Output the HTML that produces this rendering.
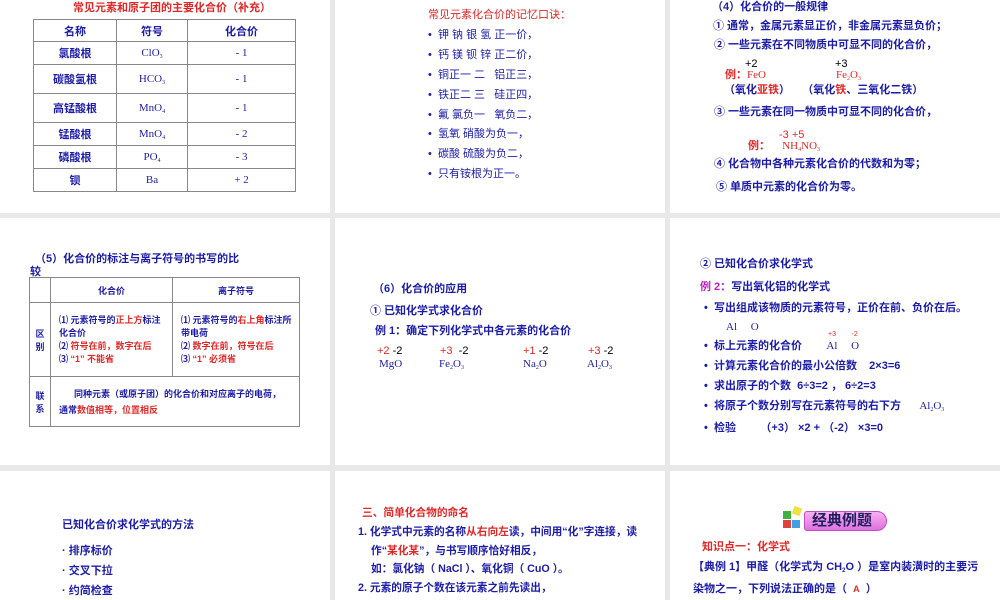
<!DOCTYPE html>
<html><head><meta charset="utf-8"><style>
*{margin:0;padding:0;box-sizing:border-box}
body{width:1000px;height:600px;background:#e8e8e8;position:relative;overflow:hidden;font-family:"Liberation Sans","Noto Sans CJK SC",sans-serif;font-size:11px;color:#1c1ca8;font-weight:bold}
.s{position:absolute;background:#fff}
.t{position:absolute;white-space:nowrap;line-height:14px}
.r{color:#e02828}.k{color:#000;font-weight:normal}.m{color:#c020c0}
sub{font-size:6px;vertical-align:-2px}
.serif{font-family:"Liberation Serif","Noto Serif CJK SC",serif;font-weight:normal}
table{position:absolute;border-collapse:collapse}
td{border:1px solid #888;text-align:center;padding:0}
.s8 .t{font-size:10.7px}
</style></head><body>
<div class="s" style="left:0;top:0;width:330px;height:213px"></div>
<div class="s" style="left:335px;top:0;width:330px;height:213px"></div>
<div class="s" style="left:670px;top:0;width:330px;height:213px"></div>
<div class="s" style="left:0;top:218px;width:330px;height:247px"></div>
<div class="s" style="left:335px;top:218px;width:330px;height:247px"></div>
<div class="s" style="left:670px;top:218px;width:330px;height:247px"></div>
<div class="s" style="left:0;top:471px;width:330px;height:129px"></div>
<div class="s" style="left:335px;top:471px;width:330px;height:129px"></div>
<div class="s" style="left:670px;top:471px;width:330px;height:129px"></div>

<!-- slide1 -->
<div class="t r" style="left:73px;top:1px">常见元素和原子团的主要化合价（补充）</div>
<table style="left:33px;top:19px;width:263px">
<tr style="height:22px"><td style="width:83px">名称</td><td style="width:71px">符号</td><td>化合价</td></tr>
<tr style="height:23px"><td>氯酸根</td><td class="serif">ClO<sub>3</sub></td><td class="serif">- 1</td></tr>
<tr style="height:29px"><td>碳酸氢根</td><td class="serif">HCO<sub>3</sub></td><td class="serif">- 1</td></tr>
<tr style="height:29px"><td>高锰酸根</td><td class="serif">MnO<sub>4</sub></td><td class="serif">- 1</td></tr>
<tr style="height:23px"><td>锰酸根</td><td class="serif">MnO<sub>4</sub></td><td class="serif">- 2</td></tr>
<tr style="height:23px"><td>磷酸根</td><td class="serif">PO<sub>4</sub></td><td class="serif">- 3</td></tr>
<tr style="height:23px"><td>钡</td><td class="serif">Ba</td><td class="serif">+ 2</td></tr>
</table>

<!-- slide2 -->
<div class="t r" style="left:428px;top:8px;font-weight:normal">常见元素化合价的记忆口诀：</div>
<div style="font-weight:normal">
<div class="t" style="left:428px;top:28px">•&nbsp; 钾 钠 银 氢 正一价，</div>
<div class="t" style="left:428px;top:48px">•&nbsp; 钙 镁 钡 锌 正二价，</div>
<div class="t" style="left:428px;top:68px">•&nbsp; 铜正一 二&nbsp;&nbsp; 铝正三，</div>
<div class="t" style="left:428px;top:88px">•&nbsp; 铁正二 三&nbsp;&nbsp; 硅正四，</div>
<div class="t" style="left:428px;top:108px">•&nbsp; 氟 氯负一&nbsp;&nbsp; 氧负二，</div>
<div class="t" style="left:428px;top:127px">•&nbsp; 氢氧 硝酸为负一，</div>
<div class="t" style="left:428px;top:147px">•&nbsp; 碳酸 硫酸为负二，</div>
<div class="t" style="left:428px;top:167px">•&nbsp; 只有铵根为正一。</div>
</div>

<!-- slide3 -->
<div class="t" style="left:712px;top:0px">（4）化合价的一般规律</div>
<div class="t" style="left:713px;top:19px">① 通常，金属元素显正价，非金属元素显负价；</div>
<div class="t" style="left:714px;top:38px">② 一些元素在不同物质中可显不同的化合价，</div>
<div class="t k" style="left:745px;top:57px">+2</div>
<div class="t k" style="left:835px;top:57px">+3</div>
<div class="t r" style="left:725px;top:68px">例：<span class="serif">FeO</span></div>
<div class="t r serif" style="left:836px;top:68px">Fe<sub>2</sub>O<sub>3</sub></div>
<div class="t" style="left:724px;top:83px">（氧化<span class="r">亚铁</span>）&nbsp;&nbsp;&nbsp; （氧化<span class="r">铁</span>、三氧化二铁）</div>
<div class="t" style="left:714px;top:105px">③ 一些元素在同一物质中可显不同的化合价，</div>
<div class="t r" style="left:779px;top:128px;font-weight:normal">-3 +5</div>
<div class="t r" style="left:748px;top:139px">例：&nbsp;&nbsp;&nbsp; <span class="serif">NH<sub>4</sub>NO<sub>3</sub></span></div>
<div class="t" style="left:714px;top:157px">④ 化合物中各种元素化合价的代数和为零；</div>
<div class="t" style="left:716px;top:180px">⑤ 单质中元素的化合价为零。</div>

<!-- slide4 -->
<div class="t" style="left:35px;top:252px">（5）化合价的标注与离子符号的书写的比</div>
<div class="t" style="left:30px;top:265px">较</div>
<table style="left:29px;top:277px;width:271px;font-size:9px">
<tr style="height:25px"><td style="width:21px"></td><td style="width:122px">化合价</td><td>离子符号</td></tr>
<tr style="height:74px"><td>区<br>别</td><td style="text-align:left;padding-left:8px;line-height:13px">⑴ 元素符号的<span class="r">正上方</span>标注<br>化合价<br>⑵ <span class="r">符号在前，数字在后</span><br>⑶ <span class="r">“1” 不能省</span></td><td style="text-align:left;padding-left:8px;line-height:13px">⑴ 元素符号的<span class="r">右上角</span>标注所<br>带电荷<br>⑵ <span class="r">数字在前，符号在后</span><br>⑶ <span class="r">“1” 必须省</span></td></tr>
<tr style="height:50px"><td>联<br>系</td><td colspan="2" style="text-align:left;padding-left:8px;line-height:16px">&nbsp;&nbsp;&nbsp;&nbsp;&nbsp; 同种元素（或原子团）的化合价和对应离子的电荷，<br>通常<span class="r">数值相等，位置相反</span></td></tr>
</table>

<!-- slide5 -->
<div class="t" style="left:373px;top:282px">（6）化合价的应用</div>
<div class="t" style="left:370px;top:304px">① 已知化学式求化合价</div>
<div class="t" style="left:375px;top:324px">例 1：确定下列化学式中各元素的化合价</div>
<div class="t k" style="left:377px;top:344px"><span class="r">+2</span> -2</div>
<div class="t k" style="left:440px;top:344px"><span class="r">+3</span>&nbsp; -2</div>
<div class="t k" style="left:523px;top:344px"><span class="r">+1</span> -2</div>
<div class="t k" style="left:588px;top:344px"><span class="r">+3</span> -2</div>
<div class="t serif" style="left:379px;top:357px;color:#1c1ca8">MgO</div>
<div class="t serif" style="left:439px;top:357px;color:#1c1ca8">Fe<sub>2</sub>O<sub>3</sub></div>
<div class="t serif" style="left:523px;top:357px;color:#1c1ca8">Na<sub>2</sub>O</div>
<div class="t serif" style="left:587px;top:357px;color:#1c1ca8">Al<sub>2</sub>O<sub>3</sub></div>

<!-- slide6 -->
<div class="t" style="left:700px;top:257px">② 已知化合价求化学式</div>
<div class="t" style="left:700px;top:280px"><span class="m">例 2：</span>写出氧化铝的化学式</div>
<div class="t" style="left:704px;top:301px">•&nbsp; 写出组成该物质的元素符号，正价在前、负价在后。</div>
<div class="t serif" style="left:726px;top:320px;color:#1c1ca8">Al&nbsp;&nbsp;&nbsp;&nbsp; O</div>
<div class="t r" style="left:828px;top:331px;font-size:7px;font-weight:normal;line-height:8px">+3&nbsp;&nbsp;&nbsp;&nbsp;&nbsp;&nbsp;&nbsp; -2</div>
<div class="t" style="left:704px;top:339px">•&nbsp; 标上元素的化合价&nbsp;&nbsp;&nbsp;&nbsp;&nbsp;&nbsp;&nbsp; <span class="serif" style="color:#1c1ca8">Al&nbsp;&nbsp;&nbsp;&nbsp; O</span></div>
<div class="t" style="left:704px;top:359px">•&nbsp; 计算元素化合价的最小公倍数&nbsp;&nbsp;&nbsp; 2×3=6</div>
<div class="t" style="left:704px;top:379px">•&nbsp; 求出原子的个数&nbsp; 6÷3=2 ， 6÷2=3</div>
<div class="t" style="left:704px;top:399px">•&nbsp; 将原子个数分别写在元素符号的右下方&nbsp;&nbsp;&nbsp;&nbsp;&nbsp; <span class="serif" style="color:#1c1ca8">Al<sub>2</sub>O<sub>3</sub></span></div>
<div class="t" style="left:704px;top:421px">•&nbsp; 检验&nbsp;&nbsp;&nbsp;&nbsp;&nbsp;&nbsp;&nbsp; （+3） ×2 + （-2） ×3=0</div>

<!-- slide7 -->
<div class="t" style="left:62px;top:518px">已知化合价求化学式的方法</div>
<div class="t" style="left:62px;top:544px">· 排序标价</div>
<div class="t" style="left:62px;top:564px">· 交叉下拉</div>
<div class="t" style="left:62px;top:584px">· 约简检查</div>

<!-- slide8 -->
<div class="s8">
<div class="t r" style="left:362px;top:506px">三、简单化合物的命名</div>
<div class="t" style="left:358px;top:525px">1. 化学式中元素的名称<span class="r">从右向左</span>读，中间用“化”字连接，读</div>
<div class="t" style="left:371px;top:544px">作“<span class="r">某化某</span>”，与书写顺序恰好相反，</div>
<div class="t" style="left:371px;top:562px">如：氯化钠（ NaCl ）、氧化铜（ CuO ）。</div>
<div class="t" style="left:358px;top:581px">2. 元素的原子个数在该元素之前先读出，</div>
</div>

<!-- slide9 -->
<div style="position:absolute;left:783px;top:511px;width:8px;height:8px;background:#40b040"></div>
<div style="position:absolute;left:783px;top:520px;width:8px;height:8px;background:#e04040"></div>
<div style="position:absolute;left:792px;top:520px;width:8px;height:8px;background:#40a0e0"></div>
<div style="position:absolute;left:793px;top:507px;width:8px;height:8px;background:#f0e040;transform:rotate(20deg)"></div>
<div style="position:absolute;left:804px;top:511px;width:83px;height:20px;background:linear-gradient(#f8b0f0,#e070e0);border-radius:3px 10px 10px 3px;border:1px solid #c050c0"></div>
<div class="t" style="left:812px;top:512px;font-size:15px;line-height:18px;color:#202060">经典例题</div>
<div class="t r" style="left:702px;top:540px">知识点一：化学式</div>
<div class="t" style="left:693px;top:560px">【典例 1】甲醛（化学式为 CH<sub>2</sub>O ）是室内装潢时的主要污</div>
<div class="t" style="left:693px;top:582px">染物之一，下列说法正确的是（ &nbsp;<span class="r" style="font-size:9px">A</span>&nbsp; ）</div>
</body></html>
